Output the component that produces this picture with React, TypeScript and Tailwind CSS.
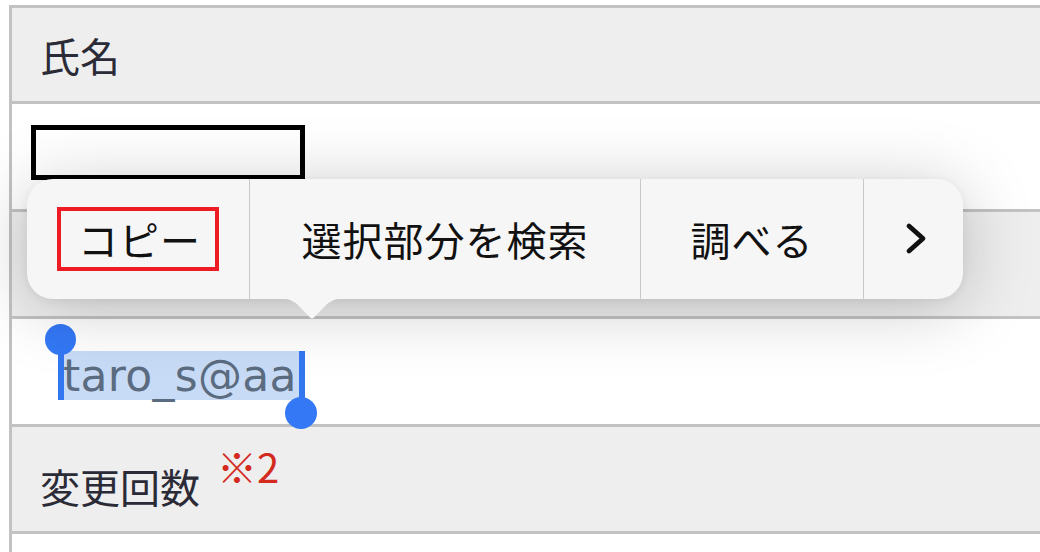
import React from "react";

const jp = "font-['Noto_Sans_CJK_JP','Noto_Sans',sans-serif]";

function HeadRow({ h, children }: { h: string; children?: React.ReactNode }) {
  return (
    <div
      className={`flex items-center border-b-[3px] border-[#c2c2c2] bg-[#eeeeee] pl-[28px] ${h}`}
    >
      {children}
    </div>
  );
}

function Popup() {
  return (
    <div className="absolute left-[27px] top-[179px] h-[120px] w-[936px]">
      <div
        className={`flex h-full w-full rounded-[26px] bg-[#f6f6f6] text-[40px] leading-[40px] tracking-[1px] text-[#111111] shadow-[0_8px_70px_rgba(0,0,0,0.22),0_2px_10px_rgba(0,0,0,0.06)] ${jp}`}
      >
        <div className="flex w-[223px] items-center justify-center border-r border-[#c9c9c9]">
          <span className="border-[4px] border-[#ed1c24] py-[8px] pl-[17px] pr-[14px]">
            コピー
          </span>
        </div>
        <div className="flex w-[391px] items-center justify-center border-r border-[#c9c9c9]">
          選択部分を検索
        </div>
        <div className="flex w-[223px] items-center justify-center border-r border-[#c9c9c9]">
          調べる
        </div>
        <div className="flex flex-1 items-center justify-center pl-[4px]">
          <svg width="24" height="34" viewBox="0 0 24 34" fill="none">
            <path
              d="M5 4 L19 16.5 L5 29"
              stroke="#111111"
              strokeWidth="4.8"
              strokeLinecap="round"
              strokeLinejoin="round"
            />
          </svg>
        </div>
      </div>
      <svg
        className="absolute left-[252px] top-[119px]"
        width="66"
        height="22"
        viewBox="0 0 66 22"
      >
        <path
          d="M0 0 L66 0 Q54 0 46 8 L35 19.5 Q33 21.5 31 19.5 L20 8 Q12 0 0 0 Z"
          fill="#f6f6f6"
        />
      </svg>
    </div>
  );
}

function EmailSelection() {
  return (
    <span className="relative inline-block h-[49px] bg-[#c8dbf6] pr-[4px] font-['DejaVu_Sans',sans-serif] text-[44px] leading-[49px] tracking-[0.3px] text-[#5b6b80]">
      taro_s@aa
      <span className="absolute left-[-5px] top-0 h-[49px] w-[6px] bg-[#3377f0]" />
      <span className="absolute left-[-18px] top-[-27px] h-[31px] w-[31px] rounded-full bg-[#3478f6]" />
      <span className="absolute right-[-4px] top-0 h-[50px] w-[6px] bg-[#3377f0]" />
      <span className="absolute right-[-16px] top-[46px] h-[32px] w-[32px] rounded-full bg-[#3478f6]" />
    </span>
  );
}

export default function App() {
  return (
    <div className="relative h-[552px] w-[1040px] overflow-hidden bg-white">
      <div className="pl-[9px] pt-[5px]">
        <div
          className={`border-l-[3px] border-t-[3px] border-[#c2c2c2] text-[40px] leading-[48px] text-[#2b2b37] ${jp}`}
        >
          <HeadRow h="h-[96px]">氏名</HeadRow>
          <div className="h-[108px] border-b-[3px] border-[#c2c2c2] bg-white pl-[19px] pt-[21px]">
            <div className="h-[55px] w-[274px] border-[5px] border-black bg-white" />
          </div>
          <HeadRow h="h-[107px]" />
          <div className="h-[108px] border-b-[3px] border-[#c2c2c2] bg-white pl-[51px] pt-[31px]">
            <EmailSelection />
          </div>
          <HeadRow h="h-[107px]">
            <div className="pb-[6px]">
              変更回数
              <span className="ml-[17px] align-[20px] text-[#d42a1e]">
                ※2
              </span>
            </div>
          </HeadRow>
          <div className="h-[40px] bg-white" />
        </div>
      </div>
      <Popup />
    </div>
  );
}
